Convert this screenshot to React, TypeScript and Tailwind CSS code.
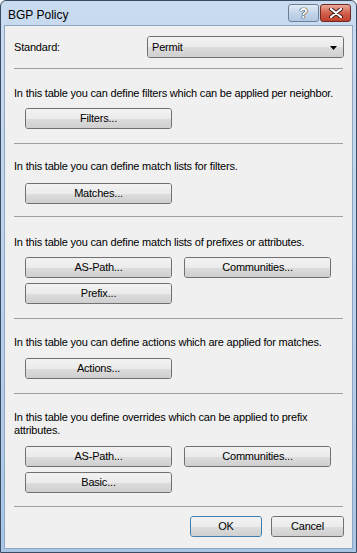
const font = { fontFamily: '"Liberation Sans", Arial, sans-serif' }

type BtnProps = { label: string; className?: string; primary?: boolean }

const Btn = ({ label, className = '', primary }: BtnProps) => (
  <div
    className={
      'relative flex h-[21px] items-center justify-center overflow-hidden rounded-[3px] border text-[11px] text-black ' +
      (primary ? 'border-[#3c7fb1] shadow-[inset_0_0_0_1px_#61d0f8] ' : 'border-[#707070] ') +
      className
    }
  >
    <div className="absolute inset-0 flex flex-col">
      <div className="h-1/2 bg-gradient-to-b from-[#f2f2f2] to-[#ebebeb]" />
      <div className="h-1/2 bg-gradient-to-b from-[#dddddd] to-[#cfcfcf]" />
    </div>
    <span className="relative">{label}</span>
  </div>
)

const Sep = ({ className = '' }: { className?: string }) => (
  <div className={'mr-[9px] ml-[9px] h-px bg-[#a0a0a0] ' + className} />
)

export default function App() {
  return (
    <div
      style={font}
      className="flex h-[553px] w-[357px] flex-col rounded-t-[6px] border border-[#3a4c63] bg-gradient-to-b from-[#c9dbef] via-[#bcd2ec] to-[#a9c5e6] pr-[3px] pb-[3px] pl-[3px]"
    >
      {/* title bar */}
      <div className="flex h-[24px] shrink-0 items-start justify-between">
        <span className="mt-[5px] ml-[4px] text-[12px] text-black">BGP Policy</span>
        <div className="mt-[3px] mr-[2px] flex gap-[1px]">
          <div className="flex h-[18px] w-[31px] items-center justify-center rounded-[3px] border border-[#6d7f94] bg-gradient-to-b from-[#e3ecf7] via-[#c4d5ea] to-[#b2c8e3]">
            <span className="text-[14px] font-bold leading-none text-white [text-shadow:0_0_1px_#333,0_0_1px_#333,0_0_1px_#333]">?</span>
          </div>
          <div className="flex h-[18px] w-[31px] items-center justify-center rounded-[3px] border border-[#6e2a22] bg-gradient-to-b from-[#e9a99b] via-[#d2604c] to-[#c2402b]">
            <svg width="14" height="10" viewBox="0 0 14 10">
              <path d="M2 1 L12 9 M12 1 L2 9" stroke="#3a1a14" strokeWidth="4" strokeLinecap="round" />
              <path d="M2 1 L12 9 M12 1 L2 9" stroke="#ffffff" strokeWidth="2.2" strokeLinecap="round" />
            </svg>
          </div>
        </div>
      </div>

      {/* client area */}
      <div className="flex flex-1 flex-col border border-[#8ea6c2] bg-[#f0f0f0] text-[11px] leading-[13px] tracking-[-0.2px] text-black">
        <div className="mt-[10px] flex items-center justify-between pr-[8px] pl-[9px]">
          <span>Standard:</span>
          <div className="relative flex h-[22px] w-[197px] items-center overflow-hidden rounded-[3px] border border-[#707070]">
            <div className="absolute inset-0 flex flex-col">
              <div className="h-1/2 bg-gradient-to-b from-[#f2f2f2] to-[#ebebeb]" />
              <div className="h-1/2 bg-gradient-to-b from-[#dddddd] to-[#cfcfcf]" />
            </div>
            <span className="relative ml-[4px]">Permit</span>
            <svg className="absolute top-[9px] right-[6px]" width="7" height="4" viewBox="0 0 7 4">
              <path d="M0 0 H7 L3.5 4 Z" fill="#000" />
            </svg>
          </div>
        </div>

        <Sep className="mt-[10px]" />
        <p className="mt-[18px] ml-[9px]">In this table you can define filters which can be applied per neighbor.</p>
        <Btn label="Filters..." className="mt-[8px] ml-[20px] w-[147px]" />

        <Sep className="mt-[14px]" />
        <p className="mt-[16px] ml-[9px]">In this table you can define match lists for filters.</p>
        <Btn label="Matches..." className="mt-[10px] ml-[20px] w-[147px]" />

        <Sep className="mt-[12px]" />
        <p className="mt-[19px] ml-[9px]">In this table you can define match lists of prefixes or attributes.</p>
        <div className="mt-[8px] ml-[20px] flex gap-[12px]">
          <Btn label="AS-Path..." className="w-[147px]" />
          <Btn label="Communities..." className="w-[147px]" />
        </div>
        <Btn label="Prefix..." className="mt-[5px] ml-[20px] w-[147px]" />

        <Sep className="mt-[14px]" />
        <p className="mt-[17px] ml-[9px]">In this table you can define actions which are applied for matches.</p>
        <Btn label="Actions..." className="mt-[9px] ml-[20px] w-[147px]" />

        <Sep className="mt-[14px]" />
        <p className="mt-[17px] ml-[9px] pr-[30px]">
          In this table you define overrides which can be applied to prefix attributes.
        </p>
        <div className="mt-[9px] ml-[20px] flex gap-[12px]">
          <Btn label="AS-Path..." className="w-[147px]" />
          <Btn label="Communities..." className="w-[147px]" />
        </div>
        <Btn label="Basic..." className="mt-[5px] ml-[20px] w-[147px]" />

        <Sep className="mt-[13px]" />
        <div className="mt-[9px] mr-[8px] flex justify-end gap-[9px]">
          <Btn label="OK" primary className="w-[72px]" />
          <Btn label="Cancel" className="w-[73px]" />
        </div>
      </div>
    </div>
  )
}
